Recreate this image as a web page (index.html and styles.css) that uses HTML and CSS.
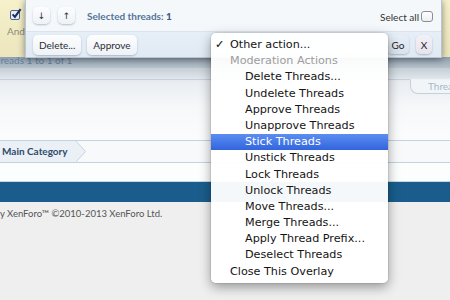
FILE: index.html
```html
<!DOCTYPE html>
<html>
<head>
<meta charset="utf-8">
<link rel="stylesheet" href="styles.css">
</head>
<body>
<div class="page">
  <div class="thread-row">
    <div class="row-check">
      <svg class="cb" width="12" height="12" viewBox="0 0 12 12"><rect x="0.5" y="2.5" width="9" height="9" rx="1.5" fill="#e6edf7" stroke="#51678a"/><path d="M2.6 6.4 L4.9 8.9 L10.6 1.2" fill="none" stroke="#1d2d58" stroke-width="2"/></svg>
      <span class="row-meta">And</span>
    </div>
  </div>
  <div class="pagenav"><span class="pagenav-text">Threads 1 to 1 of 1</span></div>
  <div class="list-foot">
    <div class="sep"></div>
    <div class="tabs"><span class="tab">Threads</span></div>
  </div>
  <div class="breadcrumb">
    <span class="crumb">Main Category</span>
    <svg class="chev" width="12" height="21" viewBox="0 0 12 21"><polygon points="0,0 10,10.5 0,21" fill="#eaf0f6"/><polyline points="0,-1 10.5,10.5 0,22" fill="none" stroke="#c4d2df"/></svg>
  </div>
  <div class="spacer"></div>
  <div class="footer-bar"></div>
  <div class="copyright">y XenForo™ ©2010-2013 XenForo Ltd.</div>

  <div class="inline-mod">
    <div class="im-top">
      <span class="btn sq">↓</span>
      <span class="btn sq">↑</span>
      <span class="sel-count">Selected threads: <b>1</b></span>
      <span class="grow"></span>
      <label class="select-all">Select all <span class="box"></span></label>
    </div>
    <div class="im-bottom">
      <span class="btn">Delete...</span>
      <span class="btn">Approve</span>
      <span class="grow"></span>
      <span class="btn go">Go</span>
      <span class="btn close">X</span>
    </div>
  </div>

  <div class="menu">
    <div class="mi top"><span class="chk">✓</span>Other action...</div>
    <div class="mi group">Moderation Actions</div>
    <div class="mi">Delete Threads...</div>
    <div class="mi">Undelete Threads</div>
    <div class="mi">Approve Threads</div>
    <div class="mi">Unapprove Threads</div>
    <div class="mi active">Stick Threads</div>
    <div class="mi">Unstick Threads</div>
    <div class="mi">Lock Threads</div>
    <div class="mi">Unlock Threads</div>
    <div class="mi">Move Threads...</div>
    <div class="mi">Merge Threads...</div>
    <div class="mi">Apply Thread Prefix...</div>
    <div class="mi">Deselect Threads</div>
    <div class="mi outer">Close This Overlay</div>
  </div>
</div>
</body>
</html>
```
FILE: styles.css
```css
* { box-sizing: border-box; margin: 0; padding: 0; }
html, body { width: 450px; height: 300px; overflow: hidden; }
body { font-family: "Lato", "DejaVu Sans", sans-serif; background: #efefef; }

.page { position: relative; width: 450px; height: 300px; display: flex; flex-direction: column; overflow: hidden; }

.thread-row { height: 57px; flex: none; background: linear-gradient(#f6f1cb, #ece5bd); display: flex; }
.row-check { width: 25px; display: flex; flex-direction: column; align-items: flex-start; padding: 8px 0 0 10px; }
.cb { display: block; }
.row-meta { font-size: 10px; color: #8f8c7a; margin: 5px 0 0 -3px; line-height: 12px; }

.pagenav { height: 11px; flex: none; background: linear-gradient(#8f9fae, #b6c1cb); overflow: hidden; }
.pagenav-text { display: block; font-size: 10px; color: #637f9c; margin: -3px 0 0 -11px; line-height: 12px; white-space: nowrap; }

.list-foot { height: 72px; flex: none; background: linear-gradient(#c5ced6 0, #e9edf1 14px, #f7f8fa 40px, #fbfcfd 72px); display: flex; flex-direction: column; }
.sep { height: 12px; border-bottom: 1px solid #c4d1dd; flex: none; }
.tabs { display: flex; justify-content: flex-end; }
.tab { width: 60px; height: 15px; margin: -1px -20px 0 0; border: 1px solid #c4d1dd; border-top: 1px solid #eef2f6; border-radius: 0 0 0 8px; background: #f2f5f8; font-size: 10px; line-height: 12px; color: #a6b9ca; padding-left: 17px; overflow: hidden; white-space: nowrap; }

.breadcrumb { height: 23px; flex: none; border-top: 1px solid #c4d2df; border-bottom: 1px solid #c4d2df; background: #f7f9fb; display: flex; }
.crumb { background: #eaf0f6; font-size: 10px; font-weight: bold; color: #2d4b6b; line-height: 21px; padding: 0 7px 0 2px; white-space: nowrap; }
.chev { display: block; flex: none; }

.spacer { height: 19px; flex: none; background: #fcfdfd; border-bottom: 1px solid #c9d8e5; }
.footer-bar { height: 20px; flex: none; background: #1a5d8c; }
.copyright { flex: 1; background: #efefef; font-size: 9.5px; color: #555; padding: 5px 0 0 0; line-height: 14px; white-space: nowrap; }

/* inline moderation overlay */
.inline-mod { position: absolute; left: 25px; top: 0; width: 417px; height: 58px; z-index: 2; display: flex; flex-direction: column; border: 1px solid #b8c5d2; border-top: none; box-shadow: 0 1px 7px rgba(0,0,0,0.45); background: #f3f7fb; }
.im-top { height: 31px; display: flex; align-items: center; padding: 0 8px 0 7px; background: #f4f8fb; }
.im-bottom { flex: 1; display: flex; align-items: center; padding: 0 8px 0 7px; background: linear-gradient(#e6eef7, #e1eaf4); border-top: 1px solid #dbe4ee; }
.grow { flex: 1; }
.btn { display: inline-flex; align-items: center; justify-content: center; height: 20px; padding: 0 6px; border-radius: 5px; background: linear-gradient(#fdfdfe, #eef2f6); box-shadow: 0 1px 2px rgba(60,80,110,0.35); font-size: 10px; color: #2a2f36; margin-right: 6px; white-space: nowrap; }
.btn.sq { width: 17px; height: 17px; padding: 0; font-size: 9px; margin-right: 8px; font-family: "DejaVu Sans", sans-serif; }
.sel-count { font-size: 10px; font-weight: bold; color: #55749a; margin-left: 4px; white-space: nowrap; }
.sel-count b { color: #3d5b80; }
.select-all { font-size: 10px; color: #333; display: flex; align-items: center; gap: 2px; white-space: nowrap; margin-top: 2px; }
.box { width: 12px; height: 11px; border: 1px solid #8a8f96; border-radius: 3px; background: linear-gradient(#fff, #eee); }
.btn.go { width: 22px; padding: 0; height: 19px; background: linear-gradient(#e7eef6, #d7e2ee); margin-right: 7px; color: #222; }
.btn.close { width: 16px; padding: 0; height: 19px; background: linear-gradient(#f3f1f6, #e6e3ec); margin-right: 1px; color: #222; }

/* native-like popup menu */
.menu { position: absolute; left: 211px; top: 33px; width: 177px; z-index: 3; background: rgba(255,255,255,0.955); border-radius: 5px; box-shadow: 0 4px 12px rgba(0,0,0,0.38), 0 0 0 1px rgba(0,0,0,0.07); padding: 4px 0 3px; font-family: "DejaVu Sans", sans-serif; font-size: 11.2px; color: #141414; }
.mi { height: 16.2px; line-height: 16.2px; padding-left: 34px; white-space: nowrap; }
.mi.top { padding-left: 4px; display: flex; }
.chk { width: 15px; flex: none; }
.mi.group { padding-left: 19px; color: #9d9d9d; }
.mi.outer { padding-left: 19px; }
.mi.active { background: linear-gradient(#5b8ef1, #3264de); color: #fff; }
```
